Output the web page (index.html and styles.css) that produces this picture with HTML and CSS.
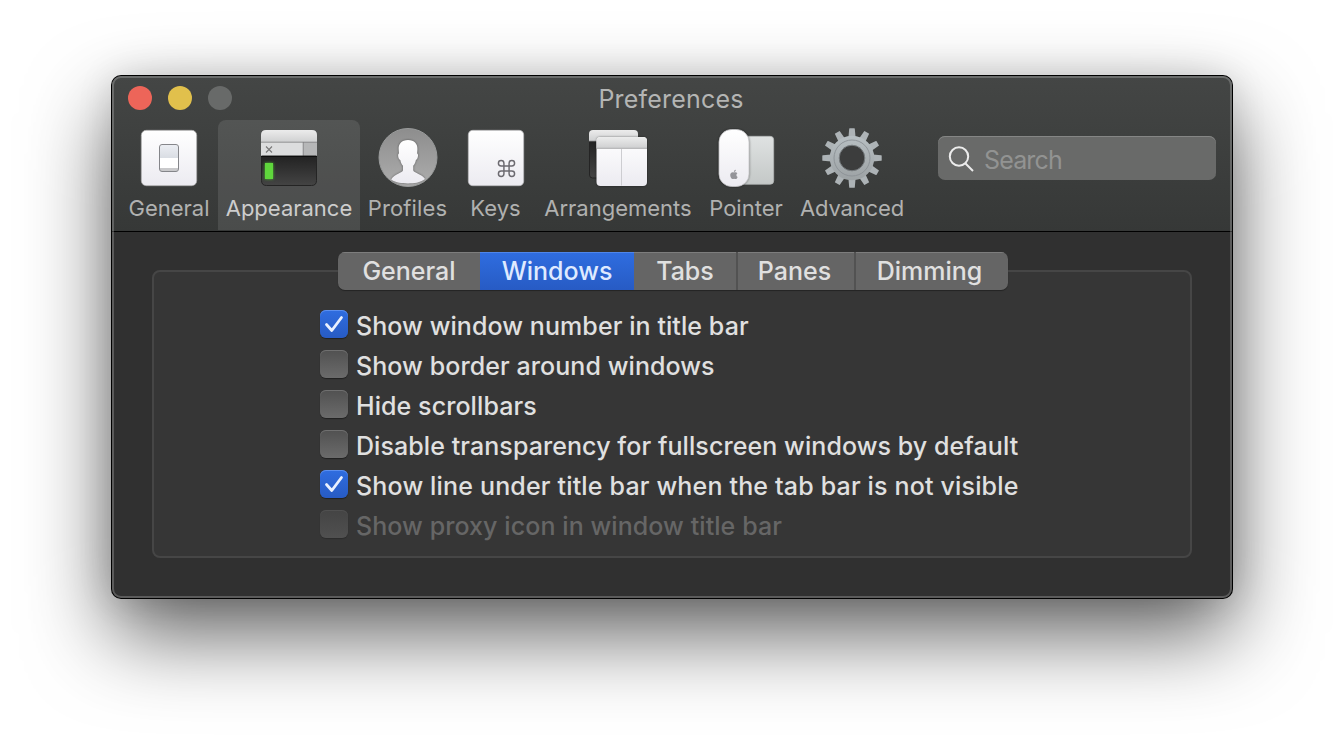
FILE: index.html
```html
<!DOCTYPE html>
<html lang="en">
<head>
<meta charset="utf-8">
<title>Preferences</title>
<link rel="stylesheet" href="styles.css">
</head>
<body>
<main class="window">
  <header class="header">
    <div class="titlebar">
      <div class="lights"><i class="light red"></i><i class="light yellow"></i><i class="light gray"></i></div>
      <h1 class="title">Preferences</h1>
    </div>
    <div class="toolbar">
      <nav class="tools">
        <a class="tool w-general">
          <svg class="icon" viewBox="0 0 60 60">
            <defs>
              <linearGradient id="tile" x1="0" y1="0" x2="0" y2="1"><stop offset="0" stop-color="#fff"/><stop offset="1" stop-color="#ecebf1"/></linearGradient>
              <linearGradient id="chrome" x1="0" y1="0" x2="0" y2="1"><stop offset="0" stop-color="#ececec"/><stop offset="1" stop-color="#cfd0d1"/></linearGradient>
              <linearGradient id="dark" x1="0" y1="0" x2="0" y2="1"><stop offset="0" stop-color="#222"/><stop offset="1" stop-color="#444"/></linearGradient>
              <linearGradient id="steel" gradientUnits="userSpaceOnUse" x1="0" y1="0" x2="0" y2="60"><stop offset="0" stop-color="#bcc4c8"/><stop offset="1" stop-color="#989d9f"/></linearGradient>
              <linearGradient id="disc" x1="0" y1="0" x2="0" y2="1"><stop offset="0" stop-color="#8d8d8d"/><stop offset="1" stop-color="#adadad"/></linearGradient>
              <linearGradient id="rocker" x1="0" y1="0" x2="0" y2="1"><stop offset="0" stop-color="#eceef3"/><stop offset="1" stop-color="#d9dde3"/></linearGradient>
              <linearGradient id="pad" x1="0" y1="0" x2="0" y2="1"><stop offset="0" stop-color="#dfe2e2"/><stop offset="1" stop-color="#c4c8c7"/></linearGradient>
            </defs>
            <rect x="2.3" y="2.3" width="55.4" height="55.4" rx="5" fill="url(#tile)" stroke="#aaa" stroke-width=".7"/>
            <rect x="20.5" y="16.5" width="19" height="27" rx="2.5" fill="#fff"/>
            <path d="M21 30V19q0-2 2-2h14q2 0 2 2v11z" fill="url(#rocker)"/>
            <path d="M21 40h18v1.500q0 2-2 2H23q-2 0-2-2z" fill="#c9c9cb"/>
            <rect x="20.500" y="16.500" width="19" height="27" rx="2.500" fill="none" stroke="#85868a"/>
          </svg>
          <span class="label">General</span>
        </a>
        <a class="tool selected w-appearance">
          <svg class="icon" viewBox="0 0 60 60">
            <path d="M2 14V7q0-5 5-5h46q5 0 5 5v7z" fill="url(#chrome)"/>
            <path d="M2 14h56v14H2z" fill="#dcddde"/>
            <path d="M44 14h14v14H44z" fill="#b6b7b8"/>
            <path d="M2 14.200h56M44.200 14v14" stroke="#7e7f80" stroke-width=".8"/>
            <path d="M7 18.500l6 6m0-6l-6 6" stroke="#777" stroke-width="1.100"/>
            <path d="M2.500 28h55v24.500q0 5-5 5h-45q-5 0-5-5z" fill="url(#dark)" stroke="#242424"/>
            <path d="M2 28.500h56" stroke="#0d0d0d" stroke-width="1.200"/>
            <rect class="glow" x="6" y="35" width="8" height="16" fill="#5fd63c"/>
          </svg>
          <span class="label">Appearance</span>
        </a>
        <a class="tool w-profiles">
          <svg class="icon" viewBox="0 0 60 60">
            <circle cx="30" cy="29.500" r="29" fill="url(#disc)" stroke="#999b9b" stroke-width="1"/>
            <path class="soft" d="M30 12c-6.500 0-9.800 4-9.300 9.700l.3 3.700c-1.600.2-.8 5.900 1.300 6.500.6 2.800 1.500 4.300 2.700 5.900v4.500c-.4 2.500-8.500 3.600-11.800 9.300C18 55 24 55.500 30 55.500s12-.5 17-4.400c-3.300-5.200-11.400-6.300-11.800-8.800v-4.500c1.200-1.600 2.100-3.100 2.700-5.900 2.100-.6 2.900-6.300 1.200-6.500l.3-3.700C39.900 16 36.500 12 30 12z" fill="url(#tile)"/>
          </svg>
          <span class="label l-profiles">Profiles</span>
        </a>
        <a class="tool w-keys">
          <svg class="icon" viewBox="0 0 60 60">
            <rect x="2.300" y="2.300" width="55.400" height="55.400" rx="4.500" fill="url(#tile)" stroke="#b9b9bb" stroke-width=".7"/>
            <g transform="translate(40.500 40.500) scale(.86)"><path d="M-3-3v-3.200a3.200 3.200 0 1 0-3.200 3.200H6.200A3.200 3.200 0 1 0 3-6.200V6.200A3.200 3.200 0 1 0 6.200 3H-6.200A3.200 3.200 0 1 0-3 6.200z" fill="none" stroke="#6c6a70" stroke-width="1.700"/></g>
          </svg>
          <span class="label">Keys</span>
        </a>
        <a class="tool w-arrangements">
          <svg class="icon" viewBox="0 0 60 60">
            <path d="M1.500 12h20v38h-17q-3 0-3-3z" fill="url(#dark)" stroke="#242424"/>
            <path d="M1 13V6q0-4 4-4h41q4 0 4 4v7z" fill="url(#chrome)"/>
            <path d="M1 13.200h8" stroke="#777" stroke-width=".8"/>
            <rect class="soft" x="8.500" y="9" width="50.500" height="49" rx="4" fill="url(#tile)"/>
            <path d="M8.500 20v-7q0-4 4-4H55q4 0 4 4v7z" fill="url(#chrome)"/>
            <path d="M8.500 20.300H59" stroke="#a9a9ab"/><path d="M33.500 21v36.500" stroke="#cdcdd1"/>
          </svg>
          <span class="label">Arrangements</span>
        </a>
        <a class="tool w-pointer">
          <svg class="icon" viewBox="0 0 60 60">
            <rect x="22" y="8.300" width="35.700" height="48" rx="3.500" fill="url(#pad)" stroke="#b5b8b7" stroke-width=".7"/>
            <rect class="soft" x="3" y="1.500" width="30" height="57" rx="12.500" fill="url(#tile)" stroke="#c4c4c6" stroke-width=".8"/>
            <path transform="translate(0 -1)" d="M19.800 42.700c-1.300.2-2 1-1.900 2.200 1.200 0 2-.9 1.900-2.200zM17.900 45.600c-1.500-1-3.700.1-3.700 2.500 0 2 1.300 4 2.400 4 .5 0 .8-.3 1.500-.3s1 .3 1.500.3c.9 0 1.700-1.400 2-2.200-1.500-.7-1.600-2.800-.2-3.700-.9-1.200-2.400-1.100-3.500-.6z" fill="#949499"/>
          </svg>
          <span class="label">Pointer</span>
        </a>
        <a class="tool w-advanced">
          <svg class="icon" viewBox="0 0 60 60">
            <g fill="#adb3b6">
              <path id="tooth" d="M26.200 12L27.200.8q0-.5.500-.5h4.600q.5 0 .5.500L33.800 12z"/>
              <use href="#tooth" transform="rotate(30 30 30)"/><use href="#tooth" transform="rotate(60 30 30)"/><use href="#tooth" transform="rotate(90 30 30)"/><use href="#tooth" transform="rotate(120 30 30)"/><use href="#tooth" transform="rotate(150 30 30)"/><use href="#tooth" transform="rotate(180 30 30)"/><use href="#tooth" transform="rotate(210 30 30)"/><use href="#tooth" transform="rotate(240 30 30)"/><use href="#tooth" transform="rotate(270 30 30)"/><use href="#tooth" transform="rotate(300 30 30)"/><use href="#tooth" transform="rotate(330 30 30)"/>
            </g>
            <circle cx="30" cy="30" r="17" fill="none" stroke="url(#steel)" stroke-width="10.500"/>
            <circle cx="30" cy="30" r="18" fill="none" stroke="#8b9195" stroke-width=".9"/>
            <circle cx="30" cy="30" r="12.800" fill="#3c3d3d" stroke="#777c7f" stroke-width="1"/>
          </svg>
          <span class="label l-advanced">Advanced</span>
        </a>
      </nav>
      <div class="search">
        <svg class="glass" viewBox="0 0 28 28"><circle cx="12" cy="12.500" r="9.200"/><path d="M18.500 19.500l7.500 7.500"/></svg>
        <span class="placeholder">Search</span>
      </div>
    </div>
  </header>
  <section class="content">
    <div class="segments">
      <span class="segment s-general"><b>General</b></span>
      <span class="segment s-windows on"><b>Windows</b></span>
      <span class="segment s-tabs"><b>Tabs</b></span>
      <span class="segment s-panes line"><b>Panes</b></span>
      <span class="segment s-dimming line"><b>Dimming</b></span>
    </div>
    <div class="group">
      <label class="option"><span class="box checked"><svg viewBox="0 0 28 28"><path d="M6.500 14.500l5.300 6L21.500 7.500"/></svg></span><span>Show window number in title bar</span></label>
      <label class="option"><span class="box"></span><span>Show border around windows</span></label>
      <label class="option"><span class="box"></span><span>Hide scrollbars</span></label>
      <label class="option"><span class="box"></span><span>Disable transparency for fullscreen windows by default</span></label>
      <label class="option"><span class="box checked"><svg viewBox="0 0 28 28"><path d="M6.500 14.500l5.300 6L21.500 7.500"/></svg></span><span class="wider">Show line under title bar when the tab bar is not visible</span></label>
      <label class="option disabled"><span class="box"></span><span>Show proxy icon in window title bar</span></label>
    </div>
  </section>
</main>
</body>
</html>
```

FILE: styles.css
```css
* { box-sizing: border-box; }
body {
  margin: 0;
  height: 746px;
  padding: 76px 112px 0;
  overflow: hidden;
  background: #fff;
  font-family: Inter, "Liberation Sans", sans-serif;
  font-size: 25px;
  color: #e0e0e0;
  white-space: nowrap;
}
.window {
  position: relative;
  width: 1120px;
  height: 522px;
  border-radius: 9px;
  background: #303030;
  box-shadow: 0 0 0 1px #000, 0 36px 84px rgba(0, 0, 0, .63), 0 0 36px rgba(0, 0, 0, .12);
}
/* Inner rim drawn above the header and content */
.window::after {
  content: "";
  position: absolute;
  inset: 0;
  border: 2px solid rgba(255, 255, 255, .21);
  border-radius: 9px;
}
.header {
  height: 156px;
  border-bottom: 1px solid #000;
  border-radius: 9px 9px 0 0;
  background: linear-gradient(#444645, #363837);
}
.titlebar {
  height: 44px;
  display: grid;
  grid-template-columns: 120px 1fr 122px;
  align-items: center;
}
.lights { display: flex; gap: 16px; padding-left: 16px; }
.light { width: 24px; height: 24px; border-radius: 50%; }
.red { background: #ed6559; }
.yellow { background: #e1c04c; }
.gray { background: #686a69; }
.title {
  margin: 2px 0 0;
  text-align: center;
  font-size: 25px;
  font-weight: 400;
  letter-spacing: .2px;
  line-height: 30px;
  color: #b4b5b4;
}
.toolbar { display: flex; justify-content: space-between; padding: 0 16px 0 8px; }
.tools { display: flex; }
.tool {
  height: 110px;
  padding-top: 8px;
  display: flex;
  flex-direction: column;
  align-items: center;
  color: #b0b1b0;
}
.selected { background: rgba(255, 255, 255, .1); border-radius: 8px 8px 0 0; color: #cdcdcd; }
.w-general { width: 98px; }
.w-appearance { width: 142px; }
.w-profiles { width: 95px; }
.w-keys { width: 81px; }
.w-arrangements { width: 164px; }
.w-pointer { width: 92px; }
.w-advanced { width: 120px; }
.icon { width: 60px; height: 60px; flex: none; }
.glow { filter: drop-shadow(0 0 1.500px #4fc22f); }
.soft { filter: drop-shadow(0 .5px 1px rgba(0, 0, 0, .45)); }
.label { margin-top: 6px; font-size: 22px; line-height: 28px; }
.l-profiles { letter-spacing: .15px; }
.l-advanced { letter-spacing: -.15px; }
.search {
  width: 278px;
  height: 44px;
  margin-top: 16px;
  padding-left: 9px;
  display: flex;
  align-items: center;
  gap: 9px;
  border-radius: 7px;
  background: #696a69;
  box-shadow: inset 0 1px #858685;
  color: #929392;
}
.glass { width: 28px; height: 28px; fill: none; stroke: #ececec; stroke-width: 2; }
.placeholder { margin-top: 3px; line-height: 30px; letter-spacing: -.85px; }
.content {
  padding: 20px 40px 0;
  display: flex;
  flex-direction: column;
  align-items: center;
}
.segments {
  z-index: 1;
  width: 670px;
  height: 38px;
  margin-right: -2px;
  display: flex;
  border-radius: 7px;
  overflow: hidden;
  background: #656565;
  box-shadow: 0 1px 1px rgba(0, 0, 0, .35);
}
.segment {
  display: flex;
  align-items: center;
  justify-content: center;
  box-shadow: inset 0 1px #7d7d7d;
}
.segment b { font-weight: 500; }
.on { background: linear-gradient(#2f6de0, #275bc4); box-shadow: inset 0 1px #4f86ea; color: #dfeaff; }
.line { border-left: 2px solid #525252; }
.s-general { width: 142px; }
.s-windows { width: 154px; }
.s-tabs { width: 102px; }
.s-panes { width: 118px; padding-right: 3px; }
.s-dimming { width: 154px; padding-right: 5px; }
.group {
  width: 1040px;
  height: 288px;
  margin-top: -20px;
  padding: 32px 0 0 166px;
  border: 2px solid #464646;
  border-radius: 8px;
  background: #363636;
}
.option { height: 40px; display: flex; align-items: center; gap: 8px; }
.option > span:last-child { line-height: 30px; padding-top: 3px; font-weight: 450; letter-spacing: .08px; }
.option > .wider:last-child { letter-spacing: .17px; }
.box {
  width: 28px;
  height: 28px;
  flex: none;
  border-radius: 6px;
  background: linear-gradient(#515151, #6b6b6b);
  box-shadow: inset 0 1px #707070, 0 1px 1px rgba(0, 0, 0, .4);
}
.checked { background: linear-gradient(#2f6de0, #275bc4); box-shadow: inset 0 1px #5c8fee, 0 1px 1px rgba(0, 0, 0, .4); }
.box svg { display: block; fill: none; stroke: #e8f0ff; stroke-width: 2.800; stroke-linecap: round; stroke-linejoin: round; }
.disabled { color: #666; }
.disabled .box { background: linear-gradient(#444, #505050); box-shadow: inset 0 1px #505050, 0 1px 1px rgba(0, 0, 0, .2); }
```
